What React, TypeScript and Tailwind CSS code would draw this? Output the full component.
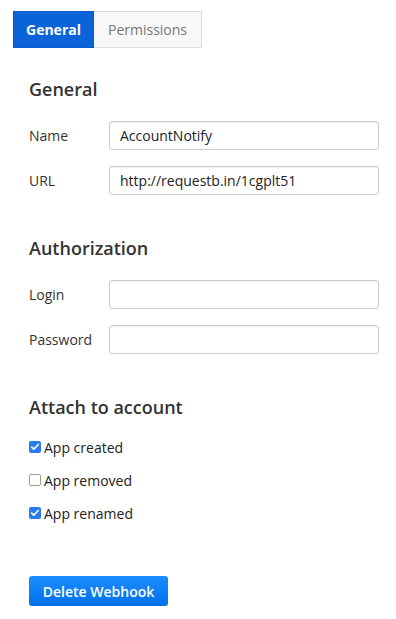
import { Check } from 'lucide-react'

const font = { fontFamily: '"Open Sans", "Liberation Sans", sans-serif' }

function Field({ label, value }: { label: string; value?: string }) {
    return (
        <div className="flex items-center h-[29px]">
            <label className="w-[80px] text-[14px] text-[#333]">{label}</label>
            <input
                readOnly
                value={value ?? ''}
                className="w-[270px] h-[29px] rounded-[3px] border border-[#ccc] bg-white px-[10px] text-[14px] text-[#222] shadow-[inset_0_1px_1px_rgba(0,0,0,0.06)] outline-none"
            />
        </div>
    )
}

function Box({ label, checked }: { label: string; checked?: boolean }) {
    return (
        <div className="flex items-center h-[20px]">
            {checked ? (
                <span className="w-[12px] h-[12px] rounded-[2px] bg-[#2a7cf0] flex items-center justify-center">
                    <Check size={10} strokeWidth={4} className="text-white" />
                </span>
            ) : (
                <span className="w-[12px] h-[12px] rounded-[2px] border border-[#999] bg-white" />
            )}
            <span className="ml-[3px] text-[14px] text-[#222]">{label}</span>
        </div>
    )
}

export default function App() {
    return (
        <div className="w-[396px] h-[619px] bg-white" style={font}>
            {/* Tabs */}
            <div className="flex pt-[11px] pl-[13px]">
                <div className="h-[37px] px-[12px] flex items-center bg-[#0a63d8] text-white text-[14px] font-bold border border-[#0a5ccc]">
                    General
                </div>
                <div className="h-[37px] px-[14px] flex items-center bg-[#f8f8f8] text-[#777] text-[14px] border border-[#ddd] border-l-0">
                    Permissions
                </div>
            </div>

            <div className="pl-[29px]">
                <h2 className="mt-[29px] text-[18px] font-semibold text-[#333] leading-[24px]">General</h2>
                <div className="mt-[20px] flex flex-col gap-[16px]">
                    <Field label="Name" value="AccountNotify" />
                    <Field label="URL" value="http://requestb.in/1cgplt51" />
                </div>

                <h2 className="mt-[41px] text-[18px] font-semibold text-[#333] leading-[24px]">Authorization</h2>
                <div className="mt-[20px] flex flex-col gap-[16px]">
                    <Field label="Login" />
                    <Field label="Password" />
                </div>

                <h2 className="mt-[41px] text-[18px] font-semibold text-[#333] leading-[24px]">Attach to account</h2>
                <div className="mt-[18px] flex flex-col gap-[13px]">
                    <Box label="App created" checked />
                    <Box label="App removed" />
                    <Box label="App renamed" checked />
                </div>

                <button className="mt-[53px] h-[30px] w-[139px] rounded-[3px] bg-gradient-to-b from-[#1b8dff] to-[#0070ea] text-white text-[14px] font-semibold">
                    Delete Webhook
                </button>
            </div>
        </div>
    )
}
